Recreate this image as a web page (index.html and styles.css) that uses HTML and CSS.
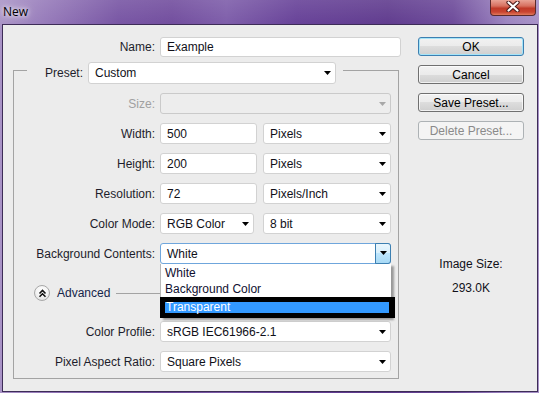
FILE: index.html
```html
<!DOCTYPE html>
<html>

<head>
    <title>New</title>
    <link rel="stylesheet" href="styles.css">
</head>

<body>
    <div class="window">
        <div class="titlebar">
            <span class="title">New</span>
            <div class="close">
                <svg width="14" height="11" viewBox="0 0 14 11">
                    <path d="M2.5 1.5 L11.5 9.5 M11.5 1.5 L2.5 9.5" stroke="#4a1a1a" stroke-width="4.2" stroke-linecap="round" />
                    <path d="M2.5 1.5 L11.5 9.5 M11.5 1.5 L2.5 9.5" stroke="#fff" stroke-width="2.2" stroke-linecap="round" />
                </svg>
            </div>
        </div>

        <div class="frame">
            <div class="main">
                <div class="row name-row">
                    <span class="lbl">Name:</span>
                    <div class="field f-name">Example</div>
                </div>

                <fieldset class="group">
                    <legend class="group-head">
                        <span class="head-lbl">Preset:</span>
                        <div class="field sel f-preset"><span>Custom</span>
                            <svg class="arr" width="7" height="4" viewBox="0 0 7 4"><path d="M0 0h7L3.5 4z" /></svg>
                        </div>
                    </legend>

                    <div class="row first">
                        <span class="lbl off">Size:</span>
                        <div class="field sel off f-wide"><span></span>
                            <svg class="arr" width="7" height="4" viewBox="0 0 7 4"><path d="M0 0h7L3.5 4z" /></svg>
                        </div>
                    </div>

                    <div class="row">
                        <span class="lbl">Width:</span>
                        <div class="field f-num">500</div>
                        <div class="field sel f-unit"><span>Pixels</span>
                            <svg class="arr" width="7" height="4" viewBox="0 0 7 4"><path d="M0 0h7L3.5 4z" /></svg>
                        </div>
                    </div>

                    <div class="row">
                        <span class="lbl">Height:</span>
                        <div class="field f-num">200</div>
                        <div class="field sel f-unit"><span>Pixels</span>
                            <svg class="arr" width="7" height="4" viewBox="0 0 7 4"><path d="M0 0h7L3.5 4z" /></svg>
                        </div>
                    </div>

                    <div class="row">
                        <span class="lbl">Resolution:</span>
                        <div class="field f-num">72</div>
                        <div class="field sel f-unit"><span>Pixels/Inch</span>
                            <svg class="arr" width="7" height="4" viewBox="0 0 7 4"><path d="M0 0h7L3.5 4z" /></svg>
                        </div>
                    </div>

                    <div class="row">
                        <span class="lbl">Color Mode:</span>
                        <div class="field sel f-mode"><span>RGB Color</span>
                            <svg class="arr" width="7" height="4" viewBox="0 0 7 4"><path d="M0 0h7L3.5 4z" /></svg>
                        </div>
                        <div class="field sel f-bits"><span>8 bit</span>
                            <svg class="arr" width="7" height="4" viewBox="0 0 7 4"><path d="M0 0h7L3.5 4z" /></svg>
                        </div>
                    </div>

                    <div class="row">
                        <span class="lbl">Background Contents:</span>
                        <div class="combo">
                            <div class="field sel focus f-wide"><span>White</span>
                                <div class="dd-btn">
                                    <svg width="7" height="4" viewBox="0 0 7 4"><path d="M0 0h7L3.5 4z" /></svg>
                                </div>
                            </div>
                            <!-- open list of the combo -->
                            <div class="list">
                                <div class="opt">White</div>
                                <div class="opt">Background Color</div>
                                <div class="hl"><div class="hl-in">Transparent</div></div>
                            </div>
                        </div>
                    </div>

                    <div class="adv-row">
                        <span class="adv-icon">
                            <svg width="9" height="9" viewBox="0 0 9 9">
                                <path d="M1.5 4.5 L4.5 1.5 L7.5 4.5 M1.5 7.8 L4.5 4.8 L7.5 7.8" fill="none" stroke="#111" stroke-width="1.6" />
                            </svg>
                        </span>
                        <span class="adv-text">Advanced</span>
                        <span class="adv-line"></span>
                    </div>

                    <div class="row after-adv">
                        <span class="lbl">Color Profile:</span>
                        <div class="field sel f-wide"><span>sRGB IEC61966-2.1</span>
                            <svg class="arr" width="7" height="4" viewBox="0 0 7 4"><path d="M0 0h7L3.5 4z" /></svg>
                        </div>
                    </div>

                    <div class="row">
                        <span class="lbl">Pixel Aspect Ratio:</span>
                        <div class="field sel f-wide"><span>Square Pixels</span>
                            <svg class="arr" width="7" height="4" viewBox="0 0 7 4"><path d="M0 0h7L3.5 4z" /></svg>
                        </div>
                    </div>
                </fieldset>
            </div>

            <div class="side">
                <div class="btn default">OK</div>
                <div class="btn">Cancel</div>
                <div class="btn">Save Preset...</div>
                <div class="btn disabled">Delete Preset...</div>

                <div class="img-size">
                    <div>Image Size:</div>
                    <div class="img-val">293.0K</div>
                </div>
            </div>
        </div>
    </div>
</body>

</html>
```

FILE: styles.css
```css
body {
    margin: 0;
    font-family: "Liberation Sans", Arial, sans-serif;
    font-size: 12px;
    color: #1d1d2b;
}

.window {
    width: 539px;
    height: 393px;
    display: flex;
    flex-direction: column;
    overflow: hidden;
    background:
        linear-gradient(180deg, rgba(255, 255, 255, 0.12), rgba(255, 255, 255, 0) 30px),
        linear-gradient(90deg, #a993c6 0%, #9579b9 8%, #7552a2 22%, #6f4a9c 32%, #7b5aa8 42%, #643e96 55%, #5d388c 72%, #6a4798 84%, #9a82bf 94%, #a690c6 100%);
}

.titlebar {
    height: 24px;
    flex: none;
    display: flex;
    align-items: flex-start;
}

.title {
    margin: 4px 0 0 3px;
    font-family: "Open Sans", "Noto Sans", sans-serif;
    font-size: 12px;
    line-height: 15px;
    color: #000;
    text-shadow: 0 0 4px #fff, 0 0 8px rgba(255, 255, 255, 0.8);
}

.close {
    margin-left: auto;
    margin-right: 3px;
    width: 46px;
    height: 16px;
    box-sizing: border-box;
    border: 1px solid #5a2a2a;
    border-top: none;
    border-radius: 0 0 4px 4px;
    background: linear-gradient(180deg, #e9a395 0%, #d7705f 40%, #c03a28 55%, #c94430 80%, #e07a5c 100%);
    display: flex;
    justify-content: center;
    align-items: flex-start;
    padding-top: 1px;
}

.frame {
    flex: 1;
    margin: 0 1px 1px 2px;
    border: 1px solid #3d2c57;
    background: #ececec;
    display: flex;
    padding: 11px 12px 0 10px;
}

.main {
    width: 389px;
    flex: none;
}

.row {
    display: flex;
    align-items: center;
    height: 21px;
    margin-top: 9px;
}

.row.first {
    margin-top: 0;
}

.row.after-adv {
    margin-top: 20px;
}

.name-row {
    margin-top: 0;
}

.lbl {
    width: 141px;
    margin-right: 5px;
    text-align: right;
    flex: none;
    white-space: nowrap;
}

.name-row .lbl {
    width: 142px;
}

.lbl.off {
    color: #a0a0a0;
}

.field {
    height: 21px;
    box-sizing: border-box;
    border: 1px solid #d2d2d2;
    border-radius: 3px;
    background: #fff;
    display: flex;
    align-items: center;
    padding-left: 6px;
    flex: none;
    white-space: nowrap;
    color: #101018;
}

.sel .arr {
    margin-left: auto;
    margin-right: 4px;
    flex: none;
}

.sel.off {
    background: #ededed;
    border-color: #cacaca;
}

.sel.off .arr {
    fill: #a8a8a8;
}

.f-name {
    width: 241px;
    height: 20px;
}

.f-preset {
    width: 248px;
    height: 22px;
}

.f-wide {
    width: 231px;
}

.f-num {
    width: 97px;
}

.f-unit {
    width: 128px;
    margin-left: 6px;
}

.f-mode {
    width: 94px;
}

.f-bits {
    width: 128px;
    margin-left: 9px;
}

/* group box with the preset in its header */
.group {
    width: 386px;
    box-sizing: border-box;
    min-width: 0;
    margin: 5px 0 0 0;
    padding: 15px 0 6px 0;
    border: 1px solid #a3a3a3;
}

.group-head {
    display: flex;
    align-items: flex-start;
    height: 16px;
    margin-left: 13px;
    padding: 0 7px 0 18px;
}

.head-lbl {
    line-height: 22px;
    margin-right: 5px;
}

.combo {
    position: relative;
}

.sel.focus {
    border-color: #6fa6dc;
    padding-right: 0;
}

.dd-btn {
    margin-left: auto;
    width: 16px;
    height: 21px;
    margin-top: -1px;
    margin-right: -1px;
    box-sizing: border-box;
    border: 1px solid #3c7fb1;
    border-radius: 0 3px 3px 0;
    background: linear-gradient(180deg, #eaf6fd 0%, #d9f0fc 45%, #bee6fd 50%, #a7d9f5 100%);
    display: flex;
    align-items: center;
    justify-content: center;
}

.list {
    position: absolute;
    top: 100%;
    left: 0;
    width: 231px;
    padding-top: 1px;
    background: #fff;
    border-left: 1px solid #b8b8b8;
    box-sizing: border-box;
    box-shadow: 3px 2px 2px rgba(0, 0, 0, 0.35);
    z-index: 2;
}

.opt {
    height: 16px;
    line-height: 16px;
    padding-left: 4px;
    color: #101030;
}

.hl {
    background: #000;
    margin-left: -1px;
    margin-right: -4px;
    padding: 5px 6px 5px 5px;
}

.hl-in {
    background: #3399ff;
    color: #fff;
    height: 11px;
    line-height: 11px;
    padding-left: 1px;
}

.adv-row {
    display: flex;
    align-items: center;
    height: 16px;
    margin-top: 21px;
    padding-left: 20px;
}

.adv-icon {
    width: 16px;
    height: 16px;
    box-sizing: border-box;
    border: 1px solid #a8a8a8;
    border-radius: 50%;
    background: radial-gradient(circle at 50% 35%, #ffffff 0%, #f4f4f4 50%, #d6d6d6 100%);
    display: flex;
    align-items: center;
    justify-content: center;
    flex: none;
}

.adv-text {
    margin-left: 7px;
    color: #15254a;
}

.adv-line {
    margin-left: 6px;
    width: 270px;
    border-top: 1px solid #a3a3a3;
}

.side {
    width: 106px;
    margin-left: 16px;
    margin-top: 1px;
    flex: none;
}

.btn {
    height: 19px;
    box-sizing: border-box;
    margin-bottom: 9px;
    border: 1px solid #707070;
    border-radius: 3px;
    background: linear-gradient(180deg, #f2f2f2 0%, #ebebeb 50%, #dddddd 50%, #cfcfcf 100%);
    display: flex;
    align-items: center;
    justify-content: center;
    color: #000;
    box-shadow: inset 0 0 0 1px rgba(255, 255, 255, 0.7);
}

.btn.default {
    border-color: #3c7fb1;
    box-shadow: inset 0 0 0 1px #a5e4f8;
}

.btn.disabled {
    border-color: #adb2b5;
    background: #f4f4f4;
    color: #8a8a8a;
    box-shadow: none;
}

.img-size {
    margin-top: 117px;
    text-align: center;
    line-height: 14px;
    color: #101018;
}

.img-val {
    margin-top: 10px;
}
```
